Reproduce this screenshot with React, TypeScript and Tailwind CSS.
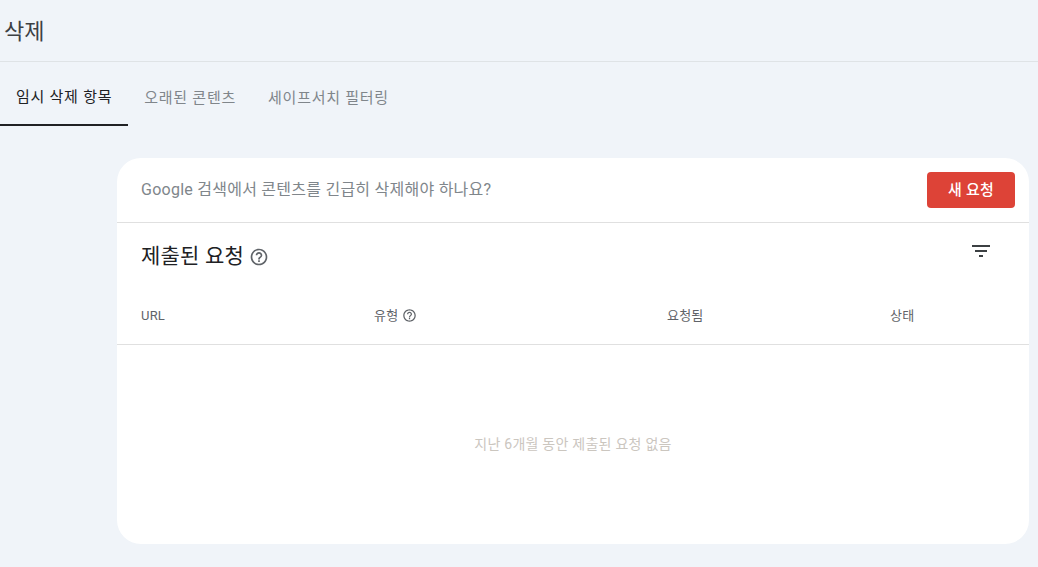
const font = "font-['Roboto','Noto_Sans_CJK_KR',sans-serif]";

function HelpIcon({ className }: { className: string }) {
  return (
    <svg viewBox="0 0 24 24" className={className} fill="currentColor">
      <path d="M11 18h2v-2h-2v2zm1-16C6.48 2 2 6.48 2 12s4.48 10 10 10 10-4.48 10-10S17.52 2 12 2zm0 18c-4.41 0-8-3.59-8-8s3.59-8 8-8 8 3.59 8 8-3.59 8-8 8zm0-14c-2.21 0-4 1.79-4 4h2c0-1.1.9-2 2-2s2 .9 2 2c0 2-3 1.75-3 5h2c0-2.25 3-2.5 3-5 0-2.21-1.79-4-4-4z" />
    </svg>
  );
}

export default function App() {
  return (
    <div className={`h-[567px] w-[1038px] overflow-hidden bg-[#f0f4f9] ${font}`}>
      {/* page title */}
      <header className="flex h-[62px] items-center border-b border-[#dfe3e6] pl-[4px] pt-[3px]">
        <h1 className="text-[22px] leading-none text-[#3c4043]">삭제</h1>
      </header>

      {/* tabs */}
      <nav className="flex h-[64px] text-[15px] tracking-[0.75px]">
        <div className="flex items-center border-b-2 border-[#202124] px-[16px] pt-[9px] text-[#202124]">
          임시 삭제 항목
        </div>
        <div className="flex items-center px-[16px] pt-[9px] text-[#80868b]">오래된 콘텐츠</div>
        <div className="flex items-center px-[16px] pt-[9px] text-[#80868b]">세이프서치 필터링</div>
      </nav>

      {/* requests card */}
      <main className="ml-[117px] mt-[32px] h-[386px] w-[912px] rounded-[24px] bg-white">
        <div className="flex h-[65px] items-center justify-between border-b border-[#e0e0e0] pl-[24px] pr-[14px]">
          <p className="text-[16px] tracking-[0.25px] text-[#80868b]">Google 검색에서 콘텐츠를 긴급히 삭제해야 하나요?</p>
          <button className="flex h-[36px] w-[88px] items-center justify-center rounded-[4px] bg-[#dd4337] text-[15px] font-medium tracking-[0.25px] text-white">
            새 요청
          </button>
        </div>

        <div className="flex h-[65px] items-center justify-between pl-[24px] pr-[36px]">
          <div className="flex items-center gap-[5px] pt-[2px]">
            <h2 className="text-[21px] tracking-[0.2px] text-[#202124]">제출된 요청</h2>
            <HelpIcon className="h-[20px] w-[20px] text-[#5f6368]" />
          </div>
          <svg viewBox="0 0 24 24" className="mb-[9px] h-[24px] w-[24px] text-[#3c4043]" fill="currentColor">
            <path d="M3 6h18v2H3zM6 11h12v2H6zM10 16h4v2h-4z" />
          </svg>
        </div>

        <div className="flex h-[57px] items-center border-b border-[#e0e0e0] pb-[1px] text-[13px] tracking-[0.2px] text-[#5f6368]">
          <div className="w-[257px] pl-[24px]">URL</div>
          <div className="flex w-[293px] items-center gap-[4px]">
            유형
            <HelpIcon className="h-[15px] w-[15px]" />
          </div>
          <div className="w-[223px]">요청됨</div>
          <div>상태</div>
        </div>

        <div className="flex h-[199px] items-center justify-center text-[14px] tracking-[0.25px] text-[#cbc6bf]">
          지난 6개월 동안 제출된 요청 없음
        </div>
      </main>
    </div>
  );
}
